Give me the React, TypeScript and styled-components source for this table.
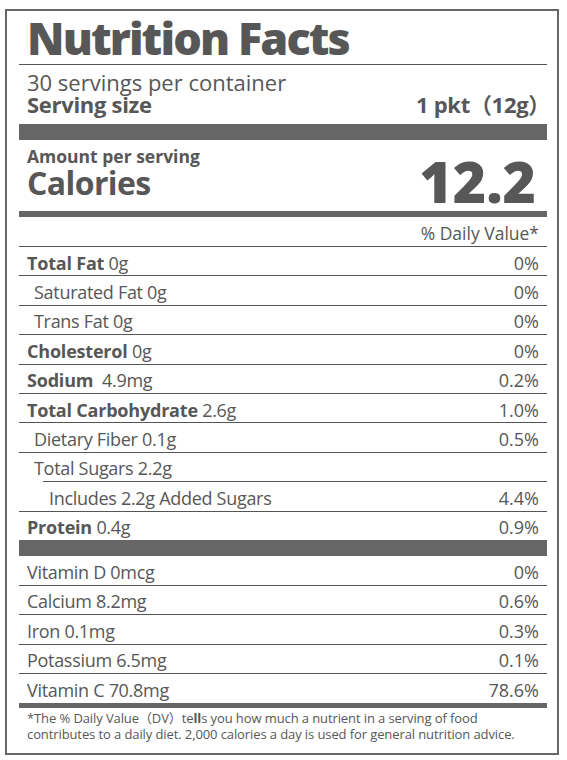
import React from "react";
import styled, { createGlobalStyle } from "styled-components";

const Global = createGlobalStyle`
  html, body {
    margin: 0;
    background: #fff;
  }
  body {
    font-family: "Open Sans", "Noto Sans CJK SC", sans-serif;
    color: #575757;
  }
`;

const Page = styled.div`
  padding: 9px 0 0 5px;
`;

const Label = styled.div`
  width: 554px;
  box-sizing: border-box;
  border: 2px solid #666;
  padding: 0 10px 0 12px;
`;

const Title = styled.h1`
  margin: 0;
  padding: 0 8px;
  font-size: 45px;
  line-height: 53px;
  font-weight: 800;
  font-stretch: 92%;
  letter-spacing: -1.9px;
  border-bottom: 1px solid #555;
`;

const ServingBlock = styled.div`
  padding: 6px 8px 9px;
  font-size: 22px;
  line-height: 22px;
`;

const ServingRow = styled.div`
  display: flex;
  justify-content: space-between;
  font-weight: 700;
  letter-spacing: -0.3px;
`;

const PacketSize = styled.span`
  margin-right: -11px;
`;

const Bar = styled.div<{ $h: number }>`
  height: ${(p) => p.$h}px;
  background: #666;
`;

const CalorieBlock = styled.div`
  display: flex;
  justify-content: space-between;
  align-items: flex-end;
  padding: 6px 8px 11px;
  font-weight: 700;
`;

const Amount = styled.div`
  font-size: 17.5px;
  line-height: 20px;
`;

const Calories = styled.div`
  font-size: 32px;
  line-height: 34px;
  letter-spacing: -0.6px;
`;

const CalorieValue = styled.div`
  font-size: 57px;
  line-height: 38px;
  font-weight: 800;
  margin-right: 3px;
`;

const DVHeader = styled.div`
  height: 29px;
  padding: 0 8px;
  display: flex;
  justify-content: flex-end;
  align-items: flex-end;
  font-size: 17.5px;
  line-height: 26px;
  border-bottom: 1px solid #555;
`;

const Row = styled.div<{ $indent: number; $rule: "full" | "indent" | "none"; $h: number; $size: number }>`
  height: ${(p) => p.$h}px;
  padding: 3px 8px 0 ${(p) => 8 + p.$indent}px;
  display: flex;
  justify-content: space-between;
  align-items: center;
  font-size: ${(p) => p.$size}px;
  border-bottom: ${(p) => (p.$rule === "full" ? "1px solid #555" : "0")};
  padding-bottom: ${(p) => (p.$rule === "indent" ? 1 : 0)}px;
  background: ${(p) =>
    p.$rule === "indent"
      ? "linear-gradient(#555, #555) no-repeat left 24px bottom / calc(100% - 24px) 1px"
      : "none"};
`;

const Name = styled.span`
  letter-spacing: -0.3px;
  b {
    font-weight: 700;
    font-stretch: 94%;
    letter-spacing: -0.2px;
  }
`;

const Footnote = styled.p`
  margin: 0;
  padding: 2px 8px 11px;
  font-size: 13px;
  line-height: 16px;
  letter-spacing: -0.1px;
  b {
    font-weight: 700;
  }
`;

type Nutrient = {
  bold?: string;
  text: string;
  dv: string;
  indent?: number;
  rule?: "full" | "indent" | "none";
};

const nutrients: Nutrient[] = [
  { bold: "Total Fat", text: " 0g", dv: "0%" },
  { text: "Saturated Fat 0g", dv: "0%", indent: 7 },
  { text: "Trans Fat 0g", dv: "0%", indent: 7 },
  { bold: "Cholesterol", text: " 0g", dv: "0%" },
  { bold: "Sodium", text: "\u00a0 4.9mg", dv: "0.2%" },
  { bold: "Total Carbohydrate", text: " 2.6g", dv: "1.0%" },
  { text: "Dietary Fiber 0.1g", dv: "0.5%", indent: 7 },
  { text: "Total Sugars 2.2g", dv: "", indent: 7, rule: "indent" },
  { text: "Includes 2.2g Added Sugars", dv: "4.4%", indent: 22 },
  { bold: "Protein", text: " 0.4g", dv: "0.9%", rule: "none" },
];

const vitamins: Nutrient[] = [
  { text: "Vitamin D 0mcg", dv: "0%" },
  { text: "Calcium 8.2mg", dv: "0.6%" },
  { text: "Iron 0.1mg", dv: "0.3%" },
  { text: "Potassium 6.5mg", dv: "0.1%" },
  { text: "Vitamin C 70.8mg", dv: "78.6%", rule: "none" },
];

export default function App() {
  return (
    <Page>
      <Global />
      <Label>
        <Title>Nutrition Facts</Title>
        <ServingBlock>
          <div>30 servings per container</div>
          <ServingRow>
            <span>Serving size</span>
            <PacketSize>1 pkt（12g）</PacketSize>
          </ServingRow>
        </ServingBlock>
        <Bar $h={16} />
        <CalorieBlock>
          <div>
            <Amount>Amount per serving</Amount>
            <Calories>Calories</Calories>
          </div>
          <CalorieValue>12.2</CalorieValue>
        </CalorieBlock>
        <Bar $h={6} />
        <DVHeader>% Daily Value*</DVHeader>
        {nutrients.map((n, i) => (
          <Row key={i} $indent={n.indent ?? 0} $rule={n.rule ?? "full"} $h={25.4} $size={18}>
            <Name>
              {n.bold && <b>{n.bold}</b>}
              {n.text}
            </Name>
            <span>{n.dv}</span>
          </Row>
        ))}
        <Bar $h={16} />
        {vitamins.map((n, i) => (
          <Row key={i} $indent={0} $rule={n.rule ?? "full"} $h={25.6} $size={18}>
            <Name>{n.text}</Name>
            <span>{n.dv}</span>
          </Row>
        ))}
        <Bar $h={5} />
        <Footnote>
          *The % Daily Value（DV）te<b>ll</b>s you how much a nutrient in a serving of food
          <br />
          contributes to a daily diet. 2,000 calories a day is used for general nutrition advice.
        </Footnote>
      </Label>
    </Page>
  );
}
